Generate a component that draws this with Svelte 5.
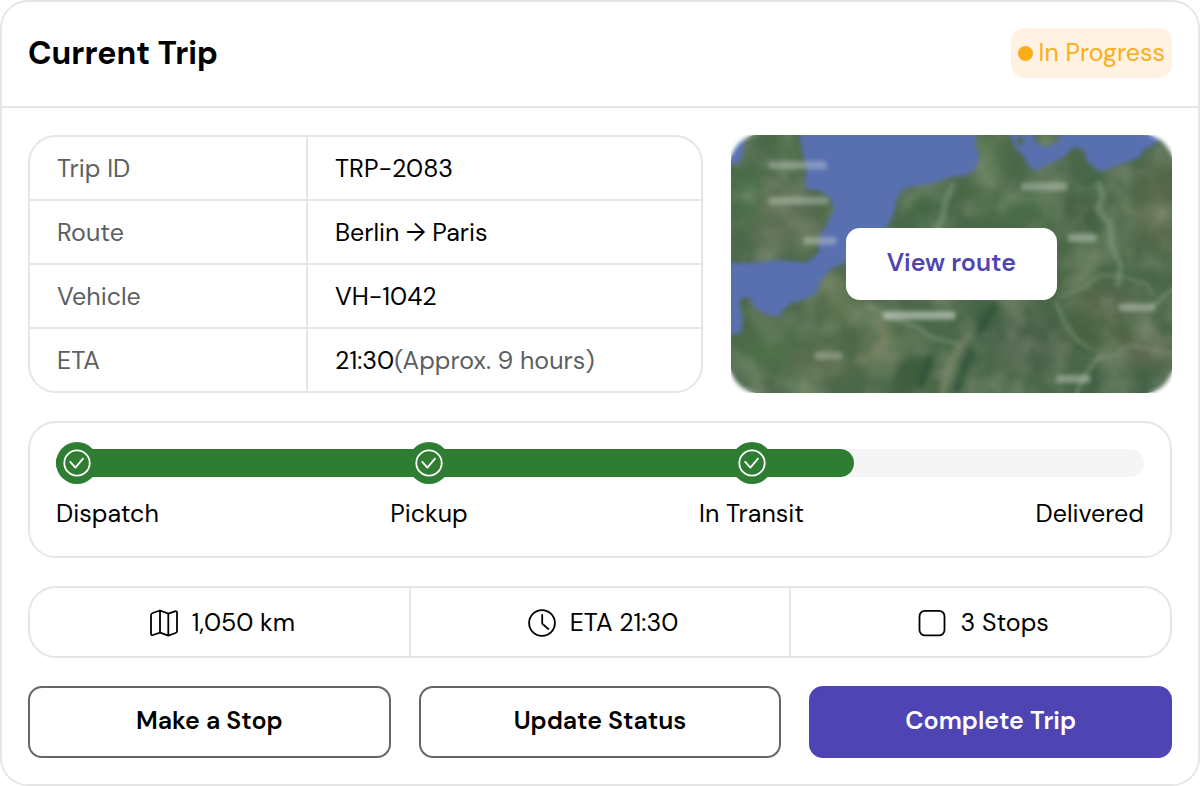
<script>
  const trip = {
    id: 'TRP-2083',
    route: 'Berlin → Paris',
    vehicle: 'VH-1042',
    eta: '21:30',
    approx: '(Approx. 9 hours)'
  };

  const steps = [
    { name: 'Dispatch', done: true },
    { name: 'Pickup', done: true },
    { name: 'In Transit', done: true },
    { name: 'Delivered', done: false }
  ];

  const stats = [
    { icon: 'map', text: '1,050 km' },
    { icon: 'clock', text: 'ETA 21:30' },
    { icon: 'stop', text: '3 Stops' }
  ];

  // place labels on the map: x, y, width, opacity
  const places = [
    [38, 26, 58, 0.36],
    [38, 61, 60, 0.36],
    [73, 101, 33, 0.36],
    [289, 47, 46, 0.36],
    [335, 98, 29, 0.42],
    [152, 175, 72, 0.55],
    [386, 167, 36, 0.4],
    [324, 238, 34, 0.4],
    [84, 215, 28, 0.3]
  ];

  let progress = 73.3;
</script>

<main class="card">
  <header>
    <h1>Current Trip</h1>
    <span class="badge"><span class="dot"></span>In Progress</span>
  </header>

  <div class="body">
    <div class="overview">
      <div class="details">
        <table>
          <tbody>
            <tr><th scope="row">Trip ID</th><td>{trip.id}</td></tr>
            <tr><th scope="row">Route</th><td>{trip.route}</td></tr>
            <tr><th scope="row">Vehicle</th><td>{trip.vehicle}</td></tr>
            <tr><th scope="row">ETA</th><td>{trip.eta}<span class="muted">{trip.approx}</span></td></tr>
          </tbody>
        </table>
      </div>

      <div class="map">
        <svg class="terrain" viewBox="0 0 440 256" preserveAspectRatio="xMidYMid slice" aria-hidden="true">
          <defs>
            <filter id="soft" x="-20%" y="-20%" width="140%" height="140%">
              <feGaussianBlur stdDeviation="9" />
            </filter>
            <filter id="mottle" x="0" y="0" width="100%" height="100%">
              <feTurbulence type="fractalNoise" baseFrequency="0.03" numOctaves="3" seed="4" />
              <feColorMatrix values="0 0 0 0 0.4  0 0 0 0 0.42  0 0 0 0 0.3  0.9 0 0 0 -0.36" />
            </filter>
            <clipPath id="land">
              <path d="M0 30 L11 27 L16 3 L17 0 H69 L72 17 L76 33 L74 53 L88 55 L100 62 L103 75 L96 88 L88 103 L88 117 L76 127 L50 124 L21 127 L0 127Z" />
              <path d="M0 198 L11 197 L13 182 L9 165 L13 161 L21 163 L23 170 L35 178 L48 180 L60 167 L75 163 L86 157 L90 145 L98 135 L111 128 L140 112 L156 92 L163 77 L166 62 L175 52 L201 48 L218 42 L235 40 L245 32 L248 20 L243 10 L245 0 H278 L283 13 L291 20 L298 33 L306 35 L318 28 L331 22 L341 12 L351 15 L355 27 L368 37 L385 30 L405 23 L411 15 L421 10 L431 0 H440 V256 H0Z" />
              <path d="M301 0 H328 L324 8 L313 12 L304 8Z M286 2 L292 3 L290 10 L284 9Z" />
            </clipPath>
          </defs>
          <rect width="440" height="256" fill="#5870b0" />
          <g clip-path="url(#land)">
            <rect width="440" height="256" fill="#4b6849" />
            <g filter="url(#soft)">
              <ellipse cx="50" cy="82" rx="34" ry="36" fill="#5d7054" />
              <ellipse cx="14" cy="60" rx="18" ry="28" fill="#4a7049" />
              <ellipse cx="60" cy="20" rx="14" ry="16" fill="#557351" />
              <ellipse cx="110" cy="165" rx="26" ry="24" fill="#5a714e" />
              <ellipse cx="40" cy="215" rx="32" ry="20" fill="#4d7049" />
              <ellipse cx="88" cy="225" rx="32" ry="16" fill="#5c6e50" />
              <ellipse cx="150" cy="205" rx="16" ry="26" fill="#5c7150" />
              <ellipse cx="185" cy="235" rx="30" ry="26" fill="#3c5d3e" />
              <ellipse cx="190" cy="72" rx="22" ry="18" fill="#446947" />
              <ellipse cx="256" cy="28" rx="10" ry="26" fill="#5c7b51" />
              <ellipse cx="285" cy="70" rx="40" ry="12" fill="#4c7049" />
              <ellipse cx="345" cy="80" rx="22" ry="20" fill="#435f40" />
              <ellipse cx="366" cy="45" rx="12" ry="12" fill="#3a6040" />
              <ellipse cx="422" cy="72" rx="20" ry="48" fill="#56674c" />
              <ellipse cx="345" cy="140" rx="24" ry="20" fill="#4b6747" />
              <ellipse cx="375" cy="168" rx="34" ry="12" fill="#5a684d" />
              <ellipse cx="250" cy="195" rx="14" ry="28" fill="#3a5b41" />
              <ellipse cx="300" cy="205" rx="40" ry="30" fill="#465f46" />
              <ellipse cx="365" cy="195" rx="30" ry="16" fill="#46623f" />
              <ellipse cx="412" cy="214" rx="30" ry="12" fill="#646b52" />
              <ellipse cx="390" cy="245" rx="40" ry="10" fill="#35583c" />
            </g>
            <rect width="440" height="256" filter="url(#mottle)" />
            <g fill="none" stroke="#8aa082" stroke-linecap="round" stroke-linejoin="round" stroke-opacity="0.45">
              <path d="M366 48 L370 60 L365 74 L378 90 L378 108 L388 130 L385 148" stroke-width="6" />
              <path d="M221 50 L214 66 L211 84 L205 94" stroke-width="6" />
              <path d="M324 167 L332 186 L345 204 L365 221 L353 237 L344 256" stroke-width="4" />
              <path d="M365 221 L382 219 L396 209 L414 212 L440 216" stroke-width="3" />
              <path d="M326 161 L352 151 L368 139 L386 140 L414 148 L420 158" stroke-width="3" />
              <path d="M440 152 L422 168" stroke-width="4" />
              <path d="M136 168 L158 182 L186 190 L200 201 L226 207" stroke-width="4" />
              <path d="M236 200 L225 214 L217 232 L212 252" stroke-width="8" stroke="#8c8d70" />
              <path d="M150 184 L153 204 L142 219 L128 224" stroke-width="9" stroke="#7e8763" />
            </g>
            <g fill="none" stroke="#2c5037" stroke-linecap="round" stroke-opacity="0.6">
              <path d="M239 217 L232 232 L226 250" stroke-width="9" />
              <path d="M198 222 L190 246" stroke-width="8" />
              <path d="M262 170 L248 194" stroke-width="8" />
              <path d="M346 209 L362 219" stroke-width="4" />
            </g>
          </g>
          {#each places as [x, y, width, opacity]}
            <rect {x} {y} {width} height="8" rx="3" fill="#dfe2df" fill-opacity={opacity} />
          {/each}
        </svg>
        <div class="frost">
          <button class="view">View route</button>
        </div>
      </div>
    </div>

    <section class="tracker" aria-label="Trip progress">
      <div class="track">
        <div class="fill" style="width: {progress}%"></div>
      </div>
      <ol>
        {#each steps as step}
          <li>
            <span class="marker" class:done={step.done}>
              {#if step.done}
                <svg width="28" height="28" viewBox="0 0 28 28" fill="none" stroke="#fff" stroke-width="1.8" stroke-linecap="round" stroke-linejoin="round" aria-hidden="true">
                  <circle cx="14" cy="14" r="12.7" />
                  <path d="M7.2 12.8 L12.4 18.6 L20 9.6" />
                </svg>
              {/if}
            </span>
            {step.name}
          </li>
        {/each}
      </ol>
    </section>

    <ul class="stats">
      {#each stats as stat}
        <li>
          <svg width="28" height="28" viewBox="0 0 28 28" fill="none" stroke="#000" stroke-width="1.8" stroke-linecap="round" stroke-linejoin="round" aria-hidden="true">
            {#if stat.icon === 'map'}
              <path d="M10 1.5 L2.7 4 Q1 4.6 1 6.2 V24.5 Q1 26.6 3 26 L10 23.6 L18.3 26.6 L25.6 24 Q27 23.5 27 22 V3.8 Q27 1.8 25 2.3 L18.3 4.6 Z M10 1.5 V23.6 M18.3 4.6 V26.6" />
            {:else if stat.icon === 'clock'}
              <circle cx="14" cy="14" r="12.9" />
              <path d="M14.2 6 V14.6 L20.3 20" />
            {:else}
              <rect x="1.5" y="1.8" width="25" height="24.6" rx="5.5" />
            {/if}
          </svg>
          {stat.text}
        </li>
      {/each}
    </ul>

    <div class="actions">
      <button>Make a Stop</button>
      <button>Update Status</button>
      <button class="primary">Complete Trip</button>
    </div>
  </div>
</main>

<style>
  :global(body) {
    background: #fff;
  }

  .card {
    box-sizing: border-box;
    border: 2px solid #e6e6e6;
    border-radius: 28px;
    background: #fff;
    color: #000;
    font-family: 'DM Sans', Inter, 'Liberation Sans', sans-serif;
    font-size: 25px;
    font-weight: 400;
    line-height: 32px;
  }

  header {
    display: flex;
    align-items: center;
    justify-content: space-between;
    padding: 26px 26px 28px;
    border-bottom: 2px solid #e6e6e6;
  }

  h1 {
    margin: 0;
    font-size: 32px;
    font-weight: 700;
    line-height: 40px;
  }

  .badge {
    display: flex;
    align-items: center;
    gap: 6px;
    padding: 9px 7px;
    border-radius: 14px;
    background: #fff2e2;
    color: #fbad18;
  }

  .dot {
    width: 15px;
    height: 15px;
    border-radius: 50%;
    background: #fbad18;
  }

  .body {
    display: flex;
    flex-direction: column;
    gap: 28px;
    padding: 27px 26px 26px;
  }

  .overview {
    display: flex;
    gap: 28px;
  }

  .details {
    flex: 672 1 0;
    border: 2px solid #e6e6e6;
    border-radius: 28px;
    box-sizing: border-box;
  }

  table {
    width: 100%;
    border-collapse: separate;
    border-spacing: 0;
  }

  th,
  td {
    padding: 16px 27px 14px;
    text-align: left;
    font-weight: inherit;
  }

  th {
    width: 278px;
    box-sizing: border-box;
    border-right: 2px solid #e6e6e6;
    color: #5c5f62;
  }

  tr:not(:last-child) > * {
    border-bottom: 2px solid #e6e6e6;
  }

  .muted {
    color: #5c5f62;
  }

  .map {
    position: relative;
    flex: 442 1 0;
    overflow: hidden;
  }

  .terrain {
    position: absolute;
    inset: 0;
    width: 100%;
    height: 100%;
    border-radius: 28px;
  }

  .frost {
    position: absolute;
    inset: 0;
    display: flex;
    align-items: center;
    justify-content: center;
    backdrop-filter: blur(2px);
  }

  button {
    padding: 17px 20px 19px;
    border: 2px solid #666;
    border-radius: 14px;
    background: #fff;
    color: #000;
    font: inherit;
    font-weight: 600;
    cursor: pointer;
  }

  .view {
    padding: 17px 39px 19px;
    border-color: #fff;
    color: #4f44b3;
  }

  .tracker {
    position: relative;
    padding: 19px 26px 26px;
    border: 2px solid #e6e6e6;
    border-radius: 28px;
  }

  .track {
    position: absolute;
    top: 26px;
    left: 26px;
    right: 26px;
    height: 28px;
    border-radius: 14px;
    background: #f5f5f5;
  }

  .fill {
    height: 100%;
    border-radius: 14px;
    background: #2e7d32;
  }

  ol,
  ul {
    margin: 0;
    padding: 0;
    list-style: none;
  }

  ol {
    position: relative;
    display: flex;
    justify-content: space-between;
  }

  ol li {
    display: flex;
    flex-direction: column;
    align-items: center;
    gap: 14px;
  }

  ol li:first-child {
    align-items: flex-start;
  }

  .marker {
    display: flex;
    align-items: center;
    justify-content: center;
    width: 42px;
    height: 42px;
    border-radius: 50%;
  }

  .marker.done {
    background: #2e7d32;
  }

  .stats {
    display: flex;
    border: 2px solid #e6e6e6;
    border-radius: 28px;
  }

  .stats li {
    display: flex;
    flex: 1;
    align-items: center;
    justify-content: center;
    gap: 14px;
    padding: 19px 0 17px 6px;
  }

  .stats li + li {
    border-left: 2px solid #e6e6e6;
  }

  .actions {
    display: flex;
    gap: 28px;
  }

  .actions button {
    flex: 1;
  }

  .actions .primary {
    border-color: #4f44b3;
    background: #4f44b3;
    color: #fff;
  }
</style>
